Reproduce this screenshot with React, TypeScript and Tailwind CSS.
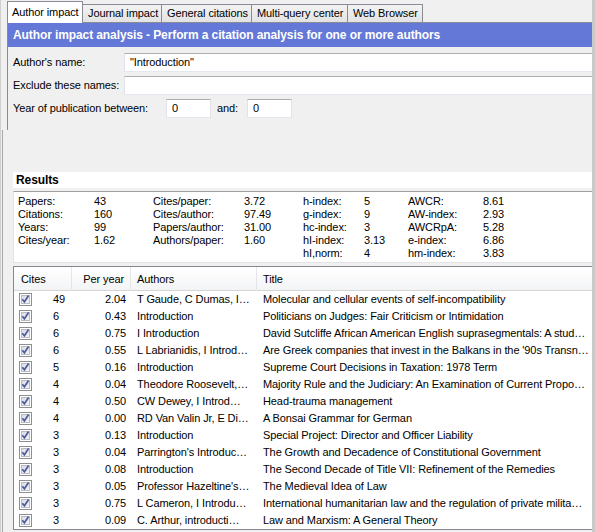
import React from "react";

const rows: [string, string, string, string][] = [
  ["49", "2.04", "T Gaude, C Dumas, I…", "Molecular and cellular events of self-incompatibility"],
  ["6", "0.43", "Introduction", "Politicians on Judges: Fair Criticism or Intimidation"],
  ["6", "0.75", "I Introduction", "David Sutcliffe African American English suprasegmentals: A stud…"],
  ["6", "0.55", "L Labrianidis, I Introd…", "Are Greek companies that invest in the Balkans in the '90s Transn…"],
  ["5", "0.16", "Introduction", "Supreme Court Decisions in Taxation: 1978 Term"],
  ["4", "0.04", "Theodore Roosevelt,…", "Majority Rule and the Judiciary: An Examination of Current Propo…"],
  ["4", "0.50", "CW Dewey, I Introd…", "Head-trauma management"],
  ["4", "0.00", "RD Van Valin Jr, E Di…", "A Bonsai Grammar for German"],
  ["3", "0.13", "Introduction", "Special Project: Director and Officer Liability"],
  ["3", "0.04", "Parrington's Introduc…", "The Growth and Decadence of Constitutional Government"],
  ["3", "0.08", "Introduction", "The Second Decade of Title VII: Refinement of the Remedies"],
  ["3", "0.05", "Professor Hazeltine's…", "The Medieval Idea of Law"],
  ["3", "0.75", "L Cameron, I Introdu…", "International humanitarian law and the regulation of private milita…"],
  ["3", "0.09", "C. Arthur, introducti…", "Law and Marxism: A General Theory"],
];

function Check() {
  return (
    <svg width="13" height="13" viewBox="0 0 13 13" className="shrink-0">
      <defs>
        <linearGradient id="cbg" x1="0" y1="0" x2="1" y2="1">
          <stop offset="0" stopColor="#d9dbe2" />
          <stop offset="1" stopColor="#f6f6f8" />
        </linearGradient>
      </defs>
      <rect x="0.5" y="0.5" width="12" height="12" fill="#ffffff" stroke="#8e8f8f" />
      <rect x="2.5" y="2.5" width="8" height="8" fill="url(#cbg)" stroke="#b9bcc4" />
      <path d="M3.3 6.2 L5.4 8.8 L9.6 2.6" fill="none" stroke="#4a5c9c" strokeWidth="1.7" />
    </svg>
  );
}

function Tab({ label, w, active }: { label: string; w: string; active?: boolean }) {
  if (active) {
    return (
      <div className={`${w} relative z-10 -mb-px h-[22px] border border-b-0 border-[#898c95] bg-white pl-[4px] pt-[2px] leading-[16px]`}>
        {label}
      </div>
    );
  }
  return (
    <div className={`${w} h-[18px] border border-b-0 border-l-0 border-[#898c95] bg-gradient-to-b from-[#f3f3f3] to-[#e3e3e3] pl-[5px] leading-[17px]`}>
      {label}
    </div>
  );
}

const inputCls =
  "h-[19px] bg-white border border-[#e2e3ea] border-t-[#abadb3] border-b-[#e3e9ef] pl-[5px] leading-[17px]";

export default function App() {
  return (
    <div className="w-[595px] h-[532px] overflow-hidden bg-[#f0f0f0] border-l border-[#cfcfcf] border-r-[3px] border-r-[#c9c9c9] font-['Liberation_Sans',Arial,sans-serif] text-[11px] tracking-[-0.1px] text-black flex flex-col">
      {/* tabs */}
      <div className="h-[22px] flex items-end pl-[6px]">
        <Tab label="Author impact" w="w-[76px]" active />
        <Tab label="Journal impact" w="w-[79px]" />
        <Tab label="General citations" w="w-[90px]" />
        <Tab label="Multi-query center" w="w-[96px]" />
        <Tab label="Web Browser" w="w-[75px]" />
      </div>

      {/* top panel */}
      <div className="ml-[6px] h-[108px] border-l border-t border-[#898c95] flex flex-col">
        <div className="h-[24px] bg-[#6478d7] pl-[5px] text-white font-bold text-[12px] leading-[24px] whitespace-nowrap">
          Author impact analysis - Perform a citation analysis for one or more authors
        </div>
        <div className="pt-[6px] flex flex-col gap-[4px]">
          <div className="flex items-center h-[19px]">
            <div className="w-[116px] pl-[5px]">Author's name:</div>
            <div className={`${inputCls} flex-1 border-r-0`}>"Introduction"</div>
          </div>
          <div className="flex items-center h-[19px]">
            <div className="w-[116px] pl-[5px]">Exclude these names:</div>
            <div className={`${inputCls} flex-1 border-r-0`}></div>
          </div>
          <div className="flex items-center h-[19px]">
            <div className="w-[158px] pl-[5px]">Year of publication between:</div>
            <div className={`${inputCls} w-[45px]`}>0</div>
            <div className="w-[36px] pl-[6px]">and:</div>
            <div className={`${inputCls} w-[45px]`}>0</div>
          </div>
        </div>
      </div>

      {/* lower part */}
      <div className="ml-[1px] flex-1 border-l border-[#a7a7a7] pl-[10px] pt-[42px] flex flex-col">
        <div className="h-[16px] bg-white pl-[3px] font-bold text-[12px] leading-[16px]">Results</div>
        <div className="mt-[3px] h-[72px] bg-white border border-r-0 border-[#e3e3e3] border-t-[#a0a0a0] pt-[3px] pl-[4px]">
          <div className="grid grid-cols-[76px_59px_91px_59px_61px_44px_75px_1fr] leading-[13px]">
            <div>Papers:</div><div>43</div><div>Cites/paper:</div><div>3.72</div><div>h-index:</div><div>5</div><div>AWCR:</div><div>8.61</div>
            <div>Citations:</div><div>160</div><div>Cites/author:</div><div>97.49</div><div>g-index:</div><div>9</div><div>AW-index:</div><div>2.93</div>
            <div>Years:</div><div>99</div><div>Papers/author:</div><div>31.00</div><div>hc-index:</div><div>3</div><div>AWCRpA:</div><div>5.28</div>
            <div>Cites/year:</div><div>1.62</div><div>Authors/paper:</div><div>1.60</div><div>hI-index:</div><div>3.13</div><div>e-index:</div><div>6.86</div>
            <div></div><div></div><div></div><div></div><div>hI,norm:</div><div>4</div><div>hm-index:</div><div>3.83</div>
          </div>
        </div>

        <div className="mt-[3px] bg-white border border-r-0 border-[#828790]">
          <div className="h-[24px] grid grid-cols-[58px_59px_126px_1fr] bg-gradient-to-b from-white to-[#f3f4f6] border-b border-[#d5d5d5] leading-[24px]">
            <div className="pl-[7px] border-r border-[#e3e5e8]">Cites</div>
            <div className="pr-[6px] text-right border-r border-[#e3e5e8]">Per year</div>
            <div className="pl-[6px] border-r border-[#e3e5e8]">Authors</div>
            <div className="pl-[6px]">Title</div>
          </div>
          {rows.map((r, i) => (
            <div key={i} className="h-[17px] grid grid-cols-[58px_59px_126px_1fr] leading-[17px] whitespace-nowrap">
              <div className="flex items-center pl-[5px]">
                <Check />
                <span className="ml-[21px]">{r[0]}</span>
              </div>
              <div className="text-right pr-[5px]">{r[1]}</div>
              <div className="pl-[6px] overflow-hidden">{r[2]}</div>
              <div className="pl-[6px] overflow-hidden">{r[3]}</div>
            </div>
          ))}
        </div>
      </div>
    </div>
  );
}
